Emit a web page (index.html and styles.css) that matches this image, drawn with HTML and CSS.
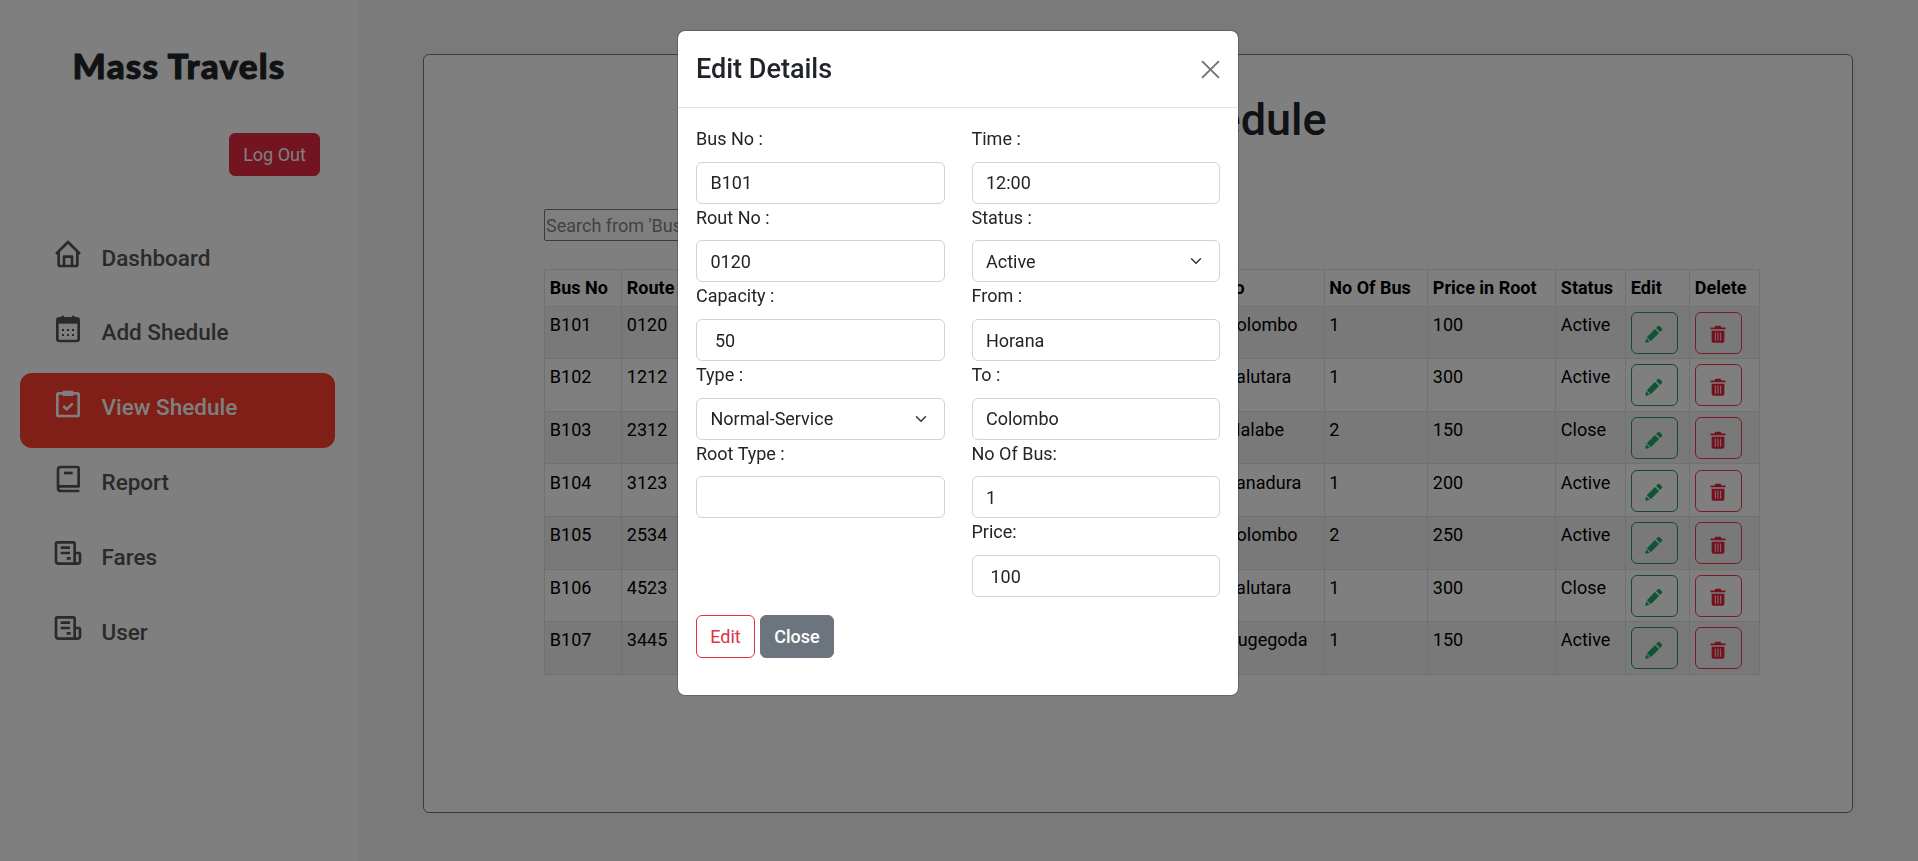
FILE: index.html
```html
<!DOCTYPE html>
<html lang="en">
<head>
<meta charset="utf-8">
<title>Mass Travels</title>
<link rel="stylesheet" href="styles.css">
</head>
<body>
<svg class="sprite" aria-hidden="true">
  <symbol id="i-pencil" viewBox="0 0 24 24"><path d="M17 1.600a2 2 0 0 1 2.800 0l2.600 2.600a2 2 0 0 1 0 2.800l-2.300 2.300-5.400-5.400zM13.300 5.300l5.400 5.400L7.800 21.600 2.400 16.200zM1.800 17.800l4.400 4.400-4.500 1.300a.9.9 0 0 1-1.200-1.200z"/></symbol>
  <symbol id="i-trash" viewBox="0 0 24 24"><path fill-rule="evenodd" d="M8.500 1h7l1 2.200H22v2.600H2V3.200h5.500zM3.500 7.500h17V21a2.500 2.500 0 0 1-2.500 2.500H6A2.500 2.500 0 0 1 3.500 21zM7.800 10v11h1.200V10zM11.400 10v11h1.200V10zM15 10v11h1.200V10z"/></symbol>
</svg>
<div class="app">
  <aside class="sidebar">
    <h1 class="brand">Mass Travels</h1>
    <div class="logout-row"><button class="btn-logout" type="button">Log Out</button></div>
    <nav class="nav">
      <a class="nav-item"><svg class="nav-icon" viewBox="0 0 24 24"><path d="M3 12l9-9 9 9"/><path d="M5 10.500V20a1 1 0 0 0 1 1h12a1 1 0 0 0 1-1v-9.500"/><path d="M9 21v-7h6v7"/></svg><span>Dashboard</span></a>
      <a class="nav-item"><svg class="nav-icon" viewBox="0 0 24 24"><rect x="4" y="4" width="16" height="17" rx="1.500"/><path class="solid" d="M4 4h16v4H4z"/><path d="M8 2v3M16 2v3"/><path class="solid" d="M7.500 12h1.500v1.500H7.500zM11.200 12h1.500v1.500h-1.500zM15 12h1.500v1.500H15zM7.500 15.800h1.500v1.500H7.500zM11.200 15.800h1.500v1.500h-1.500zM15 15.800h1.500v1.500H15z"/></svg><span>Add Shedule</span></a>
      <a class="nav-item active"><svg class="nav-icon" viewBox="0 0 24 24"><rect x="4" y="4" width="16" height="17" rx="1"/><path class="solid" d="M8 2h8v4H8z"/><path d="M8.500 13.500l2.500 2.500 4.500-4.500"/></svg><span>View Shedule</span></a>
      <a class="nav-item"><svg class="nav-icon" viewBox="0 0 24 24"><path d="M4.500 18.500V5a2 2 0 0 1 2-2H19a1 1 0 0 1 1 1v13.500H6.500a2 2 0 0 0-2 1.800a2 2 0 0 0 2 1.700H20.500"/><path d="M9 7.500h6.500"/></svg><span>Report</span></a>
      <a class="nav-item"><svg class="nav-icon" viewBox="0 0 24 24"><path d="M3 5a1 1 0 0 1 1-1h12a1 1 0 0 1 1 1v15H5a2 2 0 0 1-2-2z"/><path d="M17 12h3a1 1 0 0 1 1 1v5a2 2 0 0 1-2 2h-2"/><path d="M6.500 8h7M6.500 12h7M11 16h3"/></svg><span>Fares</span></a>
      <a class="nav-item"><svg class="nav-icon" viewBox="0 0 24 24"><path d="M3 5a1 1 0 0 1 1-1h12a1 1 0 0 1 1 1v15H5a2 2 0 0 1-2-2z"/><path d="M17 12h3a1 1 0 0 1 1 1v5a2 2 0 0 1-2 2h-2"/><path d="M6.500 8h7M6.500 12h7M11 16h3"/></svg><span>User</span></a>
    </nav>
  </aside>
  <main class="main">
    <section class="card">
      <h2 class="page-title">View Bus Shedule</h2>
      <input class="search" type="text" placeholder="Search from 'Bus No'...">
      <table class="table">
        <thead>
          <tr>
            <th class="c-bus">Bus No</th><th class="c-route">Route No</th><th class="c-type">Type</th><th class="c-root">Root Type</th><th class="c-time">Time</th><th class="c-from">From</th><th class="c-to">To</th><th class="c-nob">No Of Bus</th><th class="c-price">Price in Root</th><th class="c-status">Status</th><th class="c-edit">Edit</th><th class="c-del">Delete</th>
          </tr>
        </thead>
        <tbody>
          <tr><td>B101</td><td>0120</td><td>Normal-Service</td><td></td><td>12:00</td><td>Horana</td><td>Colombo</td><td>1</td><td>100</td><td>Active</td><td><button class="act act-edit" type="button"><svg><use href="#i-pencil"/></svg></button></td><td><button class="act act-del" type="button"><svg><use href="#i-trash"/></svg></button></td></tr>
          <tr><td>B102</td><td>1212</td><td>Normal-Service</td><td></td><td>12:00</td><td>Horana</td><td>Kalutara</td><td>1</td><td>300</td><td>Active</td><td><button class="act act-edit" type="button"><svg><use href="#i-pencil"/></svg></button></td><td><button class="act act-del" type="button"><svg><use href="#i-trash"/></svg></button></td></tr>
          <tr><td>B103</td><td>2312</td><td>Normal-Service</td><td></td><td>12:00</td><td>Horana</td><td>Malabe</td><td>2</td><td>150</td><td>Close</td><td><button class="act act-edit" type="button"><svg><use href="#i-pencil"/></svg></button></td><td><button class="act act-del" type="button"><svg><use href="#i-trash"/></svg></button></td></tr>
          <tr><td>B104</td><td>3123</td><td>Normal-Service</td><td></td><td>12:00</td><td>Horana</td><td>Panadura</td><td>1</td><td>200</td><td>Active</td><td><button class="act act-edit" type="button"><svg><use href="#i-pencil"/></svg></button></td><td><button class="act act-del" type="button"><svg><use href="#i-trash"/></svg></button></td></tr>
          <tr><td>B105</td><td>2534</td><td>Normal-Service</td><td></td><td>12:00</td><td>Horana</td><td>Colombo</td><td>2</td><td>250</td><td>Active</td><td><button class="act act-edit" type="button"><svg><use href="#i-pencil"/></svg></button></td><td><button class="act act-del" type="button"><svg><use href="#i-trash"/></svg></button></td></tr>
          <tr><td>B106</td><td>4523</td><td>Normal-Service</td><td></td><td>12:00</td><td>Horana</td><td>Kalutara</td><td>1</td><td>300</td><td>Close</td><td><button class="act act-edit" type="button"><svg><use href="#i-pencil"/></svg></button></td><td><button class="act act-del" type="button"><svg><use href="#i-trash"/></svg></button></td></tr>
          <tr><td>B107</td><td>3445</td><td>Normal-Service</td><td></td><td>12:00</td><td>Horana</td><td>Nugegoda</td><td>1</td><td>150</td><td>Active</td><td><button class="act act-edit" type="button"><svg><use href="#i-pencil"/></svg></button></td><td><button class="act act-del" type="button"><svg><use href="#i-trash"/></svg></button></td></tr>
        </tbody>
      </table>
    </section>
  </main>
</div>

<div class="backdrop">
  <div class="modal">
    <header class="modal-header">
      <h3 class="modal-title">Edit Details</h3>
      <button class="modal-close" type="button" aria-label="Close"><svg viewBox="0 0 18 18"><path d="M1 1l16 16M17 1L1 17"/></svg></button>
    </header>
    <form class="modal-body">
      <div class="form-grid">
        <div class="form-col">
          <div class="field"><label>Bus No :</label><input class="control" type="text" value="B101"></div>
          <div class="field"><label>Rout No :</label><input class="control" type="text" value="0120"></div>
          <div class="field"><label>Capacity :</label><input class="control wide-pad" type="text" value="50"></div>
          <div class="field"><label>Type :</label><select class="control select"><option>Normal-Service</option></select></div>
          <div class="field"><label>Root Type :</label><input class="control" type="text" value=""></div>
        </div>
        <div class="form-col">
          <div class="field"><label>Time :</label><input class="control" type="text" value="12:00"></div>
          <div class="field"><label>Status :</label><select class="control select"><option>Active</option></select></div>
          <div class="field"><label>From :</label><input class="control" type="text" value="Horana"></div>
          <div class="field"><label>To :</label><input class="control" type="text" value="Colombo"></div>
          <div class="field"><label>No Of Bus:</label><input class="control" type="text" value="1"></div>
          <div class="field"><label>Price:</label><input class="control wide-pad" type="text" value="100"></div>
        </div>
      </div>
      <div class="modal-actions">
        <button class="btn btn-edit" type="button">Edit</button>
        <button class="btn btn-close" type="button">Close</button>
      </div>
    </form>
  </div>
</div>
</body>
</html>
```
FILE: styles.css
```css
* { box-sizing: border-box; }
html, body { margin: 0; height: 100%; }
body {
  font-family: Roboto, "Liberation Sans", sans-serif;
  font-size: 18px;
  line-height: 1.5;
  color: #212529;
  background: #fff;
  overflow: hidden;
}
.sprite { position: absolute; width: 0; height: 0; }
.app { display: flex; height: 861px; }

/* Sidebar */
.sidebar { width: 358px; flex: none; background: #fff; display: flex; flex-direction: column; }
.brand {
  margin: 0;
  padding-top: 43px;
  height: 133px;
  text-align: center;
  font-family: Lato, "Noto Sans", sans-serif;
  font-weight: 900;
  font-size: 35px;
  line-height: 44px;
  letter-spacing: 1.2px;
  color: #212529;
  -webkit-text-stroke: 1px #212529;
}
.logout-row { display: flex; justify-content: flex-end; padding-right: 38px; }
.btn-logout {
  width: 91px; height: 43px;
  border: 1px solid #e62b40; border-radius: 6px;
  background: #e62b40; color: #fff;
  font: 400 18px/1.5 Roboto, sans-serif;
  padding: 0;
}
.nav { margin: 47.5px 0 0 20.2px; width: 315.3px; display: flex; flex-direction: column; }
.nav-item {
  height: 74.8px;
  padding: 14.7px 0 0 31.8px;
  display: flex;
  align-items: flex-start;
  gap: 17.5px;
  font-size: 22.5px;
  font-weight: 500;
  line-height: 33px;
  color: #555;
  border-radius: 12px;
}
.nav-item span { margin-top: 3.5px; }
.nav-item.active { background: #ff3e30; color: #fff; }
.nav-icon {
  width: 32px; height: 32px; flex: none;
  fill: none; stroke: currentColor; stroke-width: 2; stroke-linejoin: round; stroke-linecap: butt;
}
.nav-icon .solid { fill: currentColor; stroke: none; }

/* Main */
.main { flex: 1; min-width: 0; background: #f5f5f5; padding: 54px 65px 48px 65px; }
.card {
  height: 759px;
  border: 1px solid #767676;
  border-radius: 6px;
  background: #fff;
  padding: 36px 92px 0 120px;
}
.page-title {
  margin: 0 0 60px;
  padding-right: 10px;
  text-align: center;
  font-size: 45px;
  font-weight: 500;
  line-height: 58px;
  color: #212529;
}
.search {
  display: block;
  width: 360px; height: 32px;
  font: 400 18px/1.5 Roboto, sans-serif;
  padding: 1px;
  border: 1px solid #767676;
  border-radius: 2px;
  background: #fff;
  margin: 0 0 28px;
}
.search::placeholder { color: #858585; }

/* Table */
.table { table-layout: fixed; border-collapse: collapse; width: 1215px; font-size: 18px; }
.table th, .table td {
  border: 1px solid #dee2e6;
  padding: 4.3px 4.8px;
  vertical-align: top;
  text-align: left;
  color: #000;
  white-space: nowrap;
  overflow: hidden;
  line-height: 27px;
}
.table th { font-weight: 700; }
.table td { height: 52.6px; }
.table tbody tr:nth-child(odd) td { background: #f2f2f2; }
.c-bus { width: 77px; } .c-route { width: 100px; } .c-type { width: 150px; }
.c-root { width: 100px; } .c-time { width: 80px; } .c-from { width: 168px; }
.c-to { width: 104.5px; } .c-nob { width: 103.5px; } .c-price { width: 128px; }
.c-status { width: 70px; } .c-edit { width: 64px; } .c-del { width: 70px; }
.act {
  display: flex; align-items: center; justify-content: center;
  width: 47px; height: 42px;
  margin-top: 1px;
  padding: 3px 0 0;
  background: transparent;
  border: 1px solid; border-radius: 6px;
}
.act svg { width: 18px; height: 18px; fill: currentColor; }
.act-edit { border-color: #2a9070; color: #1fa868; }
.act-del { border-color: #f03a50; color: #e8203c; }

/* Modal */
.backdrop {
  position: fixed; inset: 0;
  background: rgba(0, 0, 0, 0.5);
  display: flex; justify-content: center; align-items: flex-start;
  padding: 30px 2px 0 0;
}
.modal {
  width: 562px; height: 666px;
  background: #fff;
  border-radius: 8px;
  border: 1px solid rgba(0, 0, 0, 0.2);
  background-clip: padding-box;
}
.modal-header {
  height: 77px;
  padding: 0 18px;
  display: flex; align-items: center; justify-content: space-between;
  border-bottom: 1px solid #dee2e6;
}
.modal-title { margin: 0; font-size: 27px; font-weight: 500; line-height: 1.2; color: #212529; }
.modal-close { width: 19px; height: 19px; padding: 0; border: 0; background: none; display: block; }
.modal-close svg { display: block; width: 19px; height: 19px; fill: none; stroke: #707070; stroke-width: 1.7; }
.modal-body { padding: 17px 18px 0; display: block; }
.form-grid { display: grid; grid-template-columns: 1fr 1fr; column-gap: 27px; }
.form-col { display: flex; flex-direction: column; }
.field { display: flex; flex-direction: column; height: 78.7px; }
.field label { line-height: 27px; margin-bottom: 9.7px; color: #212529; }
.control {
  display: block; width: 100%; height: 42px;
  padding: 6px 13.5px;
  font: 400 18px/1.5 Roboto, sans-serif;
  color: #212529;
  background-color: #fff;
  border: 1px solid #ced4da;
  border-radius: 6px;
  appearance: none;
}
.wide-pad { padding-left: 18px; }
.select {
  background-image: url("data:image/svg+xml,%3csvg xmlns='http://www.w3.org/2000/svg' viewBox='0 0 16 16'%3e%3cpath fill='none' stroke='%23343a40' stroke-linecap='round' stroke-linejoin='round' stroke-width='2' d='M2 5l6 6 6-6'/%3e%3c/svg%3e");
  background-repeat: no-repeat;
  background-position: right 15px center;
  background-size: 16px 12px;
}
.modal-actions { display: flex; gap: 5px; margin-top: 18px; }
.btn {
  height: 42.4px;
  border-radius: 6px;
  font: 400 18px/1.5 Roboto, sans-serif;
  padding: 0;
  border: 1px solid;
}
.btn-edit { width: 59px; background: #fff; border-color: #dc3545; color: #dc3545; }
.btn-close { width: 74px; background: #6c757d; border-color: #6c757d; color: #fff; font-weight: 500; }
```
